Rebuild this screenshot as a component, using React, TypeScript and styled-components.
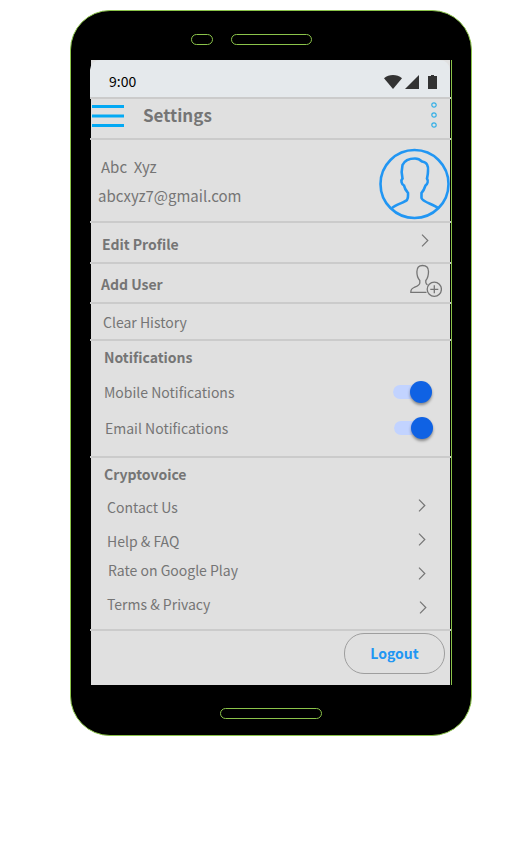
import React from "react";
import styled, { createGlobalStyle, css } from "styled-components";

const GlobalStyle = createGlobalStyle`
  *, *::before, *::after { box-sizing: border-box; }
  body {
    margin: 0;
    background: #fff;
    color: #757575;
    font-family: "Noto Sans CJK SC", "Noto Sans", sans-serif;
    font-size: 14px;
    line-height: 20px;
  }
`;

const Page = styled.main`
  padding: 10px 50px 10px 70px;
`;

const Phone = styled.div`
  background: #000;
  border: 1px solid #8bc34a;
  border-radius: 40px;
  padding: 0 19px 0 20px;
`;

const Bezel = styled.div<{ $height: number; $end: number }>`
  display: flex;
  justify-content: center;
  gap: 18px;
  height: ${(p) => p.$height}px;
  padding: 23px ${(p) => p.$end}px 0 0;
`;

const Pill = styled.span<{ $width: number }>`
  width: ${(p) => p.$width}px;
  height: 11px;
  border: 1px solid #8bc34a;
  border-radius: 6px;
`;

const Screen = styled.div`
  border-right: 1px solid #8bc34a;
  background: linear-gradient(#e0e0e0, #e0e0e0) left / calc(100% - 1px) 100% no-repeat;
`;

const StatusBar = styled.div`
  display: flex;
  align-items: center;
  height: 37px;
  margin: 0 1px 0 -1px;
  padding: 7px 13px 0 19px;
  border-radius: 10px 10px 0 0;
  background: #e5e9ec;
  color: #000;
`;

const Time = styled.time`
  flex: 1;
  padding-bottom: 2px;
`;

const StatusIcons = styled.svg`
  display: block;
`;

const section = css`
  border-top: 2px solid #cbcbcb;
  margin-left: -1px;
`;

const Header = styled.header`
  ${section}
  display: flex;
  align-items: center;
  height: 41px;
  padding: 0 13px 8px 2px;
`;

const Title = styled.h1`
  flex: 1;
  margin: 0 0 0 19px;
  font-size: 17px;
  line-height: 24px;
  font-weight: 700;
`;

const IconButton = styled.button`
  display: block;
  padding: 0;
  border: 0;
  background: none;
  cursor: pointer;
  svg { display: block; }
`;

const Account = styled.section`
  ${section}
  display: flex;
  align-items: center;
  height: 83px;
  padding-left: 8px;
`;

const AccountText = styled.div`
  flex: 1;
  font-size: 15px;
  line-height: 29px;
`;

const AccountLine = styled.p<{ $inset?: number }>`
  margin: 0;
  padding-left: ${(p) => p.$inset ?? 0}px;
  white-space: pre;
`;

const Avatar = styled.svg`
  display: block;
  margin-top: 6px;
`;

const ActionRow = styled.a<{ $height: number; $inset: number; $end?: number; $bold?: boolean }>`
  ${section}
  display: flex;
  align-items: center;
  justify-content: space-between;
  height: ${(p) => p.$height}px;
  padding: ${(p) => (p.$bold ? 2 : 0)}px ${(p) => p.$end ?? 0}px 0 ${(p) => p.$inset}px;
  color: inherit;
  font-weight: ${(p) => (p.$bold ? 700 : 400)};
  text-decoration: none;
  svg { margin-bottom: 6px; }
`;

const Group = styled.section<{ $bottom: number }>`
  ${section}
  padding-bottom: ${(p) => p.$bottom}px;
`;

const GroupTitle = styled.h2<{ $height: number }>`
  height: ${(p) => p.$height}px;
  margin: 0;
  padding-left: 14px;
  font-size: 14px;
  line-height: 33px;
  font-weight: 700;
`;

const SwitchRow = styled.label<{ $inset: number; $end: number }>`
  display: flex;
  align-items: center;
  justify-content: space-between;
  height: 36px;
  padding: 0 ${(p) => p.$end}px 0 ${(p) => p.$inset}px;
  cursor: pointer;
`;

const Switch = styled.input`
  appearance: none;
  display: flex;
  align-items: center;
  width: 39px;
  height: 22px;
  margin: 0;
  border: solid transparent;
  border-width: 4px 0;
  border-radius: 7px / 11px;
  background: #c2d3ff padding-box;
  cursor: pointer;
  &::before {
    content: "";
    flex: none;
    width: 22px;
    height: 22px;
    border-radius: 50%;
    background: #f5f5f5;
    box-shadow: 0 2px 3px rgba(0, 0, 0, 0.4);
  }
  &:checked::before {
    margin-left: auto;
    background: #0f62e4;
  }
`;

const LinkRow = styled.a<{ $inset: number; $align: "start" | "end"; $end: number }>`
  display: flex;
  align-items: center;
  justify-content: space-between;
  height: 34px;
  padding: 0 ${(p) => p.$end}px 0 ${(p) => p.$inset}px;
  color: inherit;
  text-decoration: none;
  span {
    align-self: flex-${(p) => p.$align};
    line-height: 29px;
  }
`;

const Footer = styled.footer`
  ${section}
  display: flex;
  justify-content: flex-end;
  height: 56px;
  padding: 2px 6px 0 0;
`;

const Logout = styled.button`
  width: 101px;
  height: 41px;
  padding: 0 0 2px;
  border: 1px solid #9e9e9e;
  border-radius: 20px;
  background: none;
  color: #2196f3;
  font: inherit;
  font-weight: 700;
  cursor: pointer;
`;

const Chevron = () => (
  <svg width="8" height="13" viewBox="0 0 8 13" fill="none" stroke="#757575" strokeWidth="1.2" aria-hidden="true">
    <path d="M1 .7 6.8 6.5 1 12.3" />
  </svg>
);

const switches = [
  { label: "Mobile Notifications", inset: 14, end: 19 },
  { label: "Email Notifications", inset: 15, end: 18 },
];

const links: { label: string; inset: number; align: "start" | "end"; end: number }[] = [
  { label: "Contact Us", inset: 17, align: "end", end: 25 },
  { label: "Help & FAQ", inset: 17, align: "end", end: 25 },
  { label: "Rate on Google Play", inset: 18, align: "start", end: 25 },
  { label: "Terms & Privacy", inset: 17, align: "start", end: 24 },
];

export default function App() {
  return (
    <>
      <GlobalStyle />
      <Page>
        <Phone>
          <Bezel $height={49} $end={41}>
            <Pill $width={22} />
            <Pill $width={81} />
          </Bezel>
          <Screen>
            <StatusBar>
              <Time>9:00</Time>
              <StatusIcons width="53" height="14" viewBox="0 0 53 14" fill="#333" aria-hidden="true">
                <path d="M0 3.2C5-1 13-1 18 3.2L9 14Z" />
                <path d="M35 0V14H21Z" />
                <path d="M44 1h3V0h3v1h3v13h-9Z" />
              </StatusIcons>
            </StatusBar>
            <Header>
              <IconButton aria-label="Menu">
                <svg width="32" height="25" viewBox="0 0 32 25" stroke="#03a9f4" strokeWidth="3">
                  <path d="M0 4.5h32M0 14h32M0 23.5h32" />
                </svg>
              </IconButton>
              <Title>Settings</Title>
              <IconButton aria-label="More options">
                <svg width="8" height="26" viewBox="0 0 8 26" fill="none" stroke="#35b0e6" strokeWidth="1.2">
                  <circle cx="4" cy="3" r="2.2" />
                  <circle cx="4" cy="13" r="2.2" />
                  <circle cx="4" cy="23" r="2.2" />
                </svg>
              </IconButton>
            </Header>
            <Account>
              <AccountText>
                <AccountLine $inset={3}>Abc  Xyz</AccountLine>
                <AccountLine>abcxyz7@gmail.com</AccountLine>
              </AccountText>
              <Avatar width="72" height="72" viewBox="0 0 72 72" fill="none" stroke="#2196f3" strokeWidth="2.6" role="img" aria-label="Profile picture">
                <circle cx="35.5" cy="36" r="34" />
                <path d="M13 60C17 56.5 25.5 54.5 28 52C29.5 50 29 48 29 45C27 42.5 25.5 40.5 25 37.5C22.5 36 21.5 32.5 23.5 30.5C22.5 26 22.5 21 23.5 17C25.5 12.5 31 10.5 36 10.5C39 10.5 41 11.5 43 13.5C48 14 49.5 18 49 23C49 26 48.5 28 48 30.5C49.5 33 48.5 36 46.5 37.5C45.5 40.5 44.5 43 42.5 45V50C43.5 54 54 56 59 60" />
              </Avatar>
            </Account>
            <ActionRow href="#edit-profile" $height={41} $inset={12} $end={22} $bold>
              Edit Profile
              <Chevron />
            </ActionRow>
            <ActionRow href="#add-user" $height={40} $inset={11} $end={9} $bold>
              Add User
              <svg width="32" height="34" viewBox="0 0 32 34" fill="none" stroke="#757575" strokeWidth="1.3" aria-hidden="true">
                <path d="M16.5 28.3H.8C.8 25.5 1.5 24.5 4 23.5C7 22.3 9.6 21.5 9.8 19V16.5C7.5 14 6.8 11 6.9 7.5C7 3.5 9 1.5 12.5 1.5C16.5 1.5 18.5 3.5 18.5 7.5C18.5 11 18 14 15.8 16.5V18.5C16 19.7 16.5 20.3 17.5 20.8" />
                <circle cx="24.3" cy="25.3" r="7.1" />
                <path d="M24.3 21.3v8M20.3 25.3h8" />
              </svg>
            </ActionRow>
            <ActionRow href="#clear-history" $height={37} $inset={13}>
              Clear History
            </ActionRow>
            <Group $bottom={10}>
              <GroupTitle $height={33}>Notifications</GroupTitle>
              {switches.map((s) => (
                <SwitchRow key={s.label} $inset={s.inset} $end={s.end}>
                  {s.label}
                  <Switch type="checkbox" role="switch" defaultChecked />
                </SwitchRow>
              ))}
            </Group>
            <Group $bottom={5}>
              <GroupTitle $height={30}>Cryptovoice</GroupTitle>
              {links.map((l) => (
                <LinkRow key={l.label} href="#" $inset={l.inset} $align={l.align} $end={l.end}>
                  <span>{l.label}</span>
                  <Chevron />
                </LinkRow>
              ))}
            </Group>
            <Footer>
              <Logout>Logout</Logout>
            </Footer>
          </Screen>
          <Bezel $height={50} $end={2}>
            <Pill $width={102} />
          </Bezel>
        </Phone>
      </Page>
    </>
  );
}
